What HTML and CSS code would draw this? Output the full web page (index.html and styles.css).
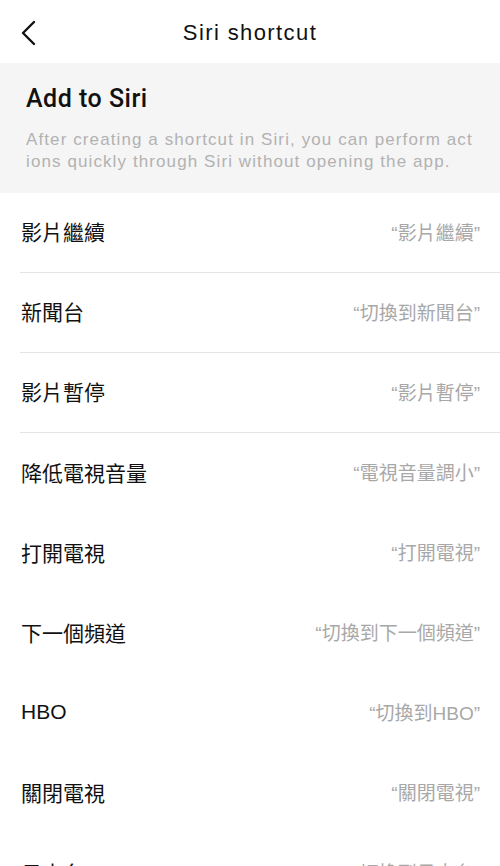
FILE: index.html
```html
<!DOCTYPE html>
<html lang="zh-Hant">
<head>
    <meta charset="UTF-8">
    <meta name="viewport" content="width=device-width, initial-scale=1.0">
    <title>Siri shortcut</title>
    <link rel="stylesheet" href="styles.css">
</head>
<body>
    <div class="nav-bar">
        <span class="back">
            <svg width="16" height="26" viewBox="0 0 16 26">
                <path d="M13 2 L2 13 L13 24" fill="none" stroke="#111" stroke-width="2.4" stroke-linecap="round" stroke-linejoin="round"/>
            </svg>
        </span>
        <div class="nav-title">Siri shortcut</div>
    </div>

    <div class="intro">
        <div class="intro-title">Add to Siri</div>
        <div class="intro-text">After creating a shortcut in Siri, you can perform actions quickly through Siri without opening the app.</div>
    </div>

    <div class="list">
        <div class="row divided"><span class="name">影片繼續</span><span class="phrase">“影片繼續”</span></div>
        <div class="row divided"><span class="name">新聞台</span><span class="phrase">“切換到新聞台”</span></div>
        <div class="row divided"><span class="name">影片暫停</span><span class="phrase">“影片暫停”</span></div>
        <div class="row"><span class="name">降低電視音量</span><span class="phrase">“電視音量調小”</span></div>
        <div class="row"><span class="name">打開電視</span><span class="phrase">“打開電視”</span></div>
        <div class="row"><span class="name">下一個頻道</span><span class="phrase">“切換到下一個頻道”</span></div>
        <div class="row"><span class="name">HBO</span><span class="phrase">“切換到HBO”</span></div>
        <div class="row"><span class="name">關閉電視</span><span class="phrase">“關閉電視”</span></div>
        <div class="row"><span class="name">日本台</span><span class="phrase">“切換到日本台”</span></div>
    </div>
</body>
</html>
```

FILE: styles.css
```css
body {
    margin: 0;
    background: #fff;
    font-family: "Liberation Sans", "Noto Sans CJK TC", sans-serif;
    color: #111;
    overflow: hidden;
}
.nav-bar {
    height: 63px;
    display: flex;
    align-items: center;
    justify-content: center;
    position: relative;
}
.back {
    position: absolute;
    left: 21px;
    top: 20px;
    display: flex;
}
.nav-title {
    font-size: 22px;
    letter-spacing: 1.4px;
    margin-top: 2px;
}
.intro {
    background: #f5f5f5;
    height: 130px;
    box-sizing: border-box;
    padding: 20px 25px 0 26px;
}
.intro-title {
    font-family: Roboto, "Liberation Sans", sans-serif;
    font-weight: 500;
    font-size: 25px;
    line-height: 32px;
    letter-spacing: 0.5px;
}
.intro-text {
    margin-top: 14px;
    font-size: 17px;
    line-height: 22px;
    color: #b2b2b2;
    word-break: break-all;
    letter-spacing: 1.1px;
}
.row {
    height: 80px;
    margin-left: 20px;
    padding: 0 20px 3px 0;
    box-sizing: border-box;
    display: flex;
    align-items: center;
    justify-content: space-between;
}
.row.divided {
    border-bottom: 1px solid #e4e4e4;
}
.name {
    font-size: 21px;
    padding-left: 1px;
}
.phrase {
    font-size: 19px;
    color: #a8a8a8;
}
```
